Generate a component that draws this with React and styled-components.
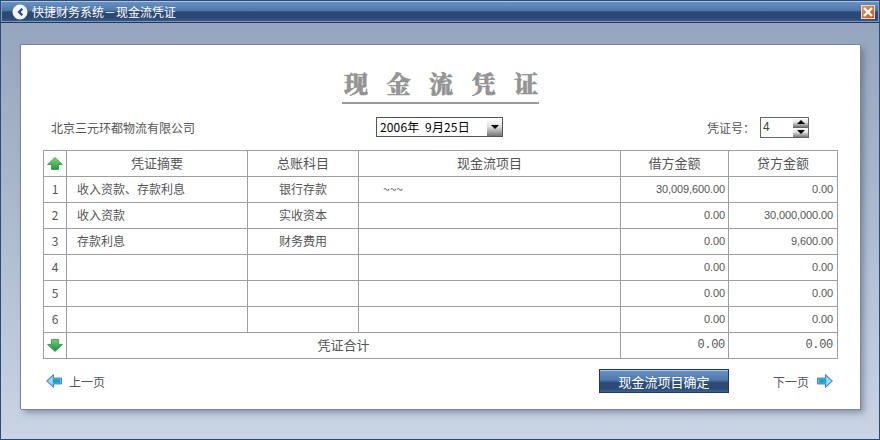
import React from 'react';
import styled, { createGlobalStyle } from 'styled-components';

const GlobalStyle = createGlobalStyle`
  html, body { margin: 0; padding: 0; background: #fff; }
  body { font-family: "Noto Sans CJK SC", "Liberation Sans", sans-serif; }
`;

const Window = styled.div`
  width: 880px;
  height: 440px;
  box-sizing: border-box;
  display: flex;
  flex-direction: column;
  border: 1px solid #2c4a74;
  overflow: hidden;
  background: linear-gradient(to bottom, #94a3bd 0%, #a9b8cd 45%, #c9d5e5 100%);
`;

const TitleBar = styled.div`
  height: 22px;
  flex: none;
  display: flex;
  align-items: center;
  padding: 0 4px 0 11px;
  box-sizing: border-box;
  border-bottom: 1px solid #1f3a60;
  box-shadow: inset 0 1px 0 #a9c4e4, inset 1px 0 0 #7f9cc4, inset -1px 0 0 #7f9cc4, inset 0 -1px 0 #7d95b8;
  background: linear-gradient(to bottom, #6d93c4 0%, #4f78ab 45%, #2a4a75 52%, #2a4a75 80%, #3e5f8c 100%);
`;

const TitleText = styled.span`
  flex: 1;
  margin-left: 4px;
  font-size: 12px;
  line-height: 20px;
  color: #fff;
`;

const CloseBox = styled.div`
  width: 14px;
  height: 14px;
  box-sizing: border-box;
  display: flex;
  align-items: center;
  justify-content: center;
  border: 1px solid #e8d8c8;
  background: linear-gradient(135deg, #e59a5a, #c4581e);
`;

const Card = styled.div`
  flex: none;
  margin: 21px 19px 0 19px;
  width: 840px;
  height: 365px;
  box-sizing: border-box;
  padding: 0 21px 0 22px;
  background: #fff;
  border-top: 1px solid #7d8590;
  border-left: 1px solid #7d8590;
  box-shadow: 1px 1px 0 #7d8590, 4px 4px 6px rgba(60, 75, 105, 0.45);
  display: flex;
  flex-direction: column;
  color: #555;
`;

const Heading = styled.div`
  margin: 20px 0 0 299px;
  height: 39px;
  width: 197px;
  box-sizing: border-box;
  border-bottom: 2px solid #9a9a9a;
  padding-left: 2px;
  font-family: "Noto Serif CJK SC", "Noto Sans CJK SC", serif;
  font-size: 24px;
  font-weight: 900;
  line-height: 36px;
  letter-spacing: 18.5px;
  white-space: nowrap;
  color: #949494;
  -webkit-text-stroke: 0.5px #949494;
`;

const InfoRow = styled.div`
  height: 46px;
  display: grid;
  grid-template-columns: 333px 1fr auto;
  align-items: center;
  font-size: 12px;
`;

const Company = styled.span`
  padding-left: 8px;
  color: #555;
`;

const DateBox = styled.div`
  width: 127px;
  height: 20px;
  box-sizing: border-box;
  display: flex;
  border: 1px solid #555;
  font-size: 12px;
  color: #000;
  line-height: 18px;
  background: #fff;
`;

const DateValue = styled.span`
  flex: 1;
  padding-left: 3px;
  white-space: pre;
  letter-spacing: 0.15px;
`;

const ArrowBtn = styled.div`
  width: ${(p) => p.$w}px;
  height: ${(p) => p.$h}px;
  display: flex;
  align-items: center;
  justify-content: center;
  box-sizing: border-box;
  background: linear-gradient(to bottom, #fff 0%, #e4e4e4 45%, #777 100%);
`;

const Voucher = styled.div`
  display: flex;
  align-items: center;
  padding-right: 30px;
`;

const VoucherLabel = styled.span`
  width: 53px;
  color: #555;
`;

const Spin = styled.div`
  display: flex;
  width: 49px;
  height: 21px;
  box-sizing: border-box;
  border: 1px solid #666;
`;

const SpinValue = styled.span`
  flex: 1;
  padding-left: 2px;
  font-size: 12px;
  line-height: 16px;
  color: #444;
`;

const SpinBtns = styled.div`
  width: 15px;
  display: flex;
  flex-direction: column;
  gap: 1px;
  background: #666;
`;

const Table = styled.table`
  width: 794px;
  table-layout: fixed;
  border-collapse: collapse;
  font-size: 12px;
  color: #555;
`;

const Cell = styled.td`
  border: 1px solid #9e9e9e;
  height: 23px;
  padding: 0 0 2px ${(p) => (p.$align === 'left' ? '10px' : '0')};
  text-align: ${(p) => p.$align || 'center'};
  white-space: nowrap;
  line-height: 14px;
  vertical-align: middle;
`;

const IconCell = styled(Cell)`
  padding: 2px 0 0;
`;

const HeadCell = styled(Cell).attrs({ as: 'th' })`
  font-weight: normal;
  font-size: 13px;
`;

const SumCell = styled(Cell)`
  font-size: 13px;
`;

const Amount = styled(Cell)`
  font-family: "Liberation Sans", sans-serif;
  font-size: 11px;
  letter-spacing: -0.1px;
  text-align: right;
  padding-right: ${(p) => p.$pad}px;
`;

const Total = styled(Amount)`
  font-family: "Liberation Mono", monospace;
  font-size: 12px;
  letter-spacing: -0.3px;
`;

const Project = styled.span`
  padding-left: 14px;
`;

const Footer = styled.div`
  flex: 1;
  display: flex;
  align-items: center;
  justify-content: space-between;
  padding: 0 6px 6px 3px;
  font-size: 12px;
`;

const PageLink = styled.div`
  display: flex;
  align-items: center;
  gap: ${(p) => p.$gap}px;
  color: #555;
`;

const FooterRight = styled.div`
  display: flex;
  align-items: center;
  gap: 44px;
`;

const ConfirmButton = styled.button`
  width: 130px;
  height: 24px;
  padding: 0;
  font-family: inherit;
  font-size: 13px;
  color: #fff;
  border: 1px solid #1f3a60;
  box-shadow: inset 0 1px 0 #a9c4e4;
  background: linear-gradient(to bottom, #6d93c4 0%, #4f78ab 45%, #2c4c78 58%, #2c4c78 85%, #3f608d 100%);
`;

const UpGreen = () => (
  <svg width="16" height="13" viewBox="0 0 16 13">
    <defs>
      <linearGradient id="gu" x1="0" y1="0" x2="0" y2="1">
        <stop offset="0" stopColor="#7fd77f" />
        <stop offset="1" stopColor="#1f9a3a" />
      </linearGradient>
    </defs>
    <path d="M8 .5 15.5 7.5H11.5V12.5H4.5V7.5H.5Z" fill="url(#gu)" stroke="#2c8a3f" strokeWidth=".7" />
  </svg>
);

const DownGreen = () => (
  <svg width="16" height="13" viewBox="0 0 16 13">
    <defs>
      <linearGradient id="gd" x1="0" y1="0" x2="0" y2="1">
        <stop offset="0" stopColor="#6fce74" />
        <stop offset="1" stopColor="#1a8f36" />
      </linearGradient>
    </defs>
    <path d="M4.5.5H11.5V5.5H15.5L8 12.5.5 5.5H4.5Z" fill="url(#gd)" stroke="#2c8a3f" strokeWidth=".7" />
  </svg>
);

const BlueArrow = ({ flip }) => (
  <svg width="16" height="14" viewBox="0 0 16 14" style={flip ? { transform: 'scaleX(-1)' } : undefined}>
    <path d="M8.5.5 15.5 7 8.5 13.5V10H.5V4H8.5Z" fill="#6db9ee" stroke="#2f6fb5" strokeWidth=".8" />
    <path d="M9.5 3 13.8 7 9.5 11Z" fill="#a9d8f5" />
    <rect x="2" y="5.2" width="7" height="3.6" fill="#17a3c9" />
  </svg>
);

const Triangle = ({ up, size = 5 }) => (
  <svg width={size * 2} height={size} viewBox="0 0 10 5">
    <path d={up ? 'M5 0 10 5H0Z' : 'M0 0H10L5 5Z'} fill="#000" />
  </svg>
);

const rows = [
  ['1', '收入资款、存款利息', '银行存款', '~~~', '30,009,600.00', '0.00'],
  ['2', '收入资款', '实收资本', '', '0.00', '30,000,000.00'],
  ['3', '存款利息', '财务费用', '', '0.00', '9,600.00'],
  ['4', '', '', '', '0.00', '0.00'],
  ['5', '', '', '', '0.00', '0.00'],
  ['6', '', '', '', '0.00', '0.00'],
];

export default function App() {
  return (
    <>
      <GlobalStyle />
      <Window>
        <TitleBar>
          <svg width="16" height="16" viewBox="0 0 16 16">
            <circle cx="8" cy="8" r="7.5" fill="#f2f4f8" />
            <path d="M9.5 4 5.5 8l4 4 1.6-1.5L8.6 8l2.5-2.5Z" fill="#2a4a75" />
          </svg>
          <TitleText>快捷财务系统－现金流凭证</TitleText>
          <CloseBox>
            <svg width="10" height="10" viewBox="0 0 10 10">
              <path d="M1 1 9 9M9 1 1 9" stroke="#fff" strokeWidth="2.4" />
            </svg>
          </CloseBox>
        </TitleBar>
        <Card>
          <Heading>现金流凭证</Heading>
          <InfoRow>
            <Company>北京三元环都物流有限公司</Company>
            <DateBox>
              <DateValue>2006年  9月25日</DateValue>
              <ArrowBtn $w={15} $h={18}>
                <Triangle size={4} />
              </ArrowBtn>
            </DateBox>
            <Voucher>
              <VoucherLabel>凭证号：</VoucherLabel>
              <Spin>
                <SpinValue>4</SpinValue>
                <SpinBtns>
                  <ArrowBtn $w={15} $h={9}>
                    <Triangle up size={4} />
                  </ArrowBtn>
                  <ArrowBtn $w={15} $h={9}>
                    <Triangle size={4} />
                  </ArrowBtn>
                </SpinBtns>
              </Spin>
            </Voucher>
          </InfoRow>
          <Table>
            <colgroup>
              <col width="23" />
              <col width="181" />
              <col width="111" />
              <col width="262" />
              <col width="108" />
              <col width="109" />
            </colgroup>
            <thead>
              <tr>
                <IconCell as="th"><UpGreen /></IconCell>
                <HeadCell>凭证摘要</HeadCell>
                <HeadCell>总账科目</HeadCell>
                <HeadCell>现金流项目</HeadCell>
                <HeadCell>借方金额</HeadCell>
                <HeadCell>贷方金额</HeadCell>
              </tr>
            </thead>
            <tbody>
              {rows.map((r) => (
                <tr key={r[0]}>
                  <Cell>{r[0]}</Cell>
                  <Cell $align="left">{r[1]}</Cell>
                  <Cell>{r[2]}</Cell>
                  <Cell $align="left"><Project>{r[3]}</Project></Cell>
                  <Amount $pad={3}>{r[4]}</Amount>
                  <Amount $pad={4}>{r[5]}</Amount>
                </tr>
              ))}
              <tr>
                <IconCell><DownGreen /></IconCell>
                <SumCell colSpan={3}>凭证合计</SumCell>
                <Total $pad={3}>0.00</Total>
                <Total $pad={4}>0.00</Total>
              </tr>
            </tbody>
          </Table>
          <Footer>
            <PageLink $gap={7}><BlueArrow flip />上一页</PageLink>
            <FooterRight>
              <ConfirmButton>现金流项目确定</ConfirmButton>
              <PageLink $gap={8}>下一页<BlueArrow /></PageLink>
            </FooterRight>
          </Footer>
        </Card>
      </Window>
    </>
  );
}
